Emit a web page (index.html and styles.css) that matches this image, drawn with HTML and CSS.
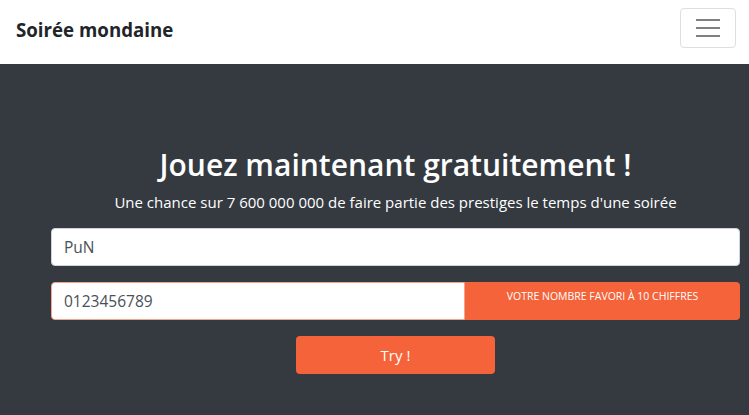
FILE: index.html
```html
<!DOCTYPE html>
<html>
	<head>
		<meta charset="UTF-8">
		<title>Soirée mondaine</title>
		<link rel="stylesheet" href="styles.css">
	</head>
	<body>
		<nav class="navbar">
			<a href="#" class="brand">Soirée mondaine</a>
			<button class="toggler" type="button">
				<span class="bar"></span>
				<span class="bar"></span>
				<span class="bar"></span>
			</button>
		</nav>
		<div class="main">
			<h1 class="title">Jouez maintenant gratuitement !</h1>
			<p class="lead">Une chance sur 7 600 000 000 de faire partie des prestiges le temps d'une soirée</p>
			<form class="form">
				<input class="field" type="text" value="PuN">
				<div class="group">
					<input class="field field-num" type="text" value="0123456789">
					<span class="addon">VOTRE NOMBRE FAVORI À 10 CHIFFRES</span>
				</div>
				<button class="btn" type="button">Try !</button>
			</form>
		</div>
	</body>
</html>
```

FILE: styles.css
```css
* {
	margin:0;
	padding:0;
	box-sizing:border-box;
}
body {
	font-family:"Open Sans", "Noto Sans", sans-serif;
	background:#343a40;
	height:415px;
	overflow:hidden;
}
.navbar {
	height:64px;
	background:#fff;
	display:flex;
	align-items:center;
	justify-content:space-between;
	padding:0 13px 0 16px;
}
	.brand {
		color:#212529;
		font-size:18.7px;
		font-weight:700;
		text-decoration:none;
		margin-top:-5px;
	}
	.toggler {
		width:56px;
		height:40px;
		margin-top:-8px;
		background:#fff;
		border:1px solid #dedede;
		border-radius:4px;
		display:flex;
		flex-direction:column;
		align-items:center;
		justify-content:center;
		gap:6px;
	}
		.toggler .bar {
			display:block;
			width:24px;
			height:2px;
			background:#808080;
		}
.main {
	padding:81px 9px 0 51px;
	text-align:center;
	color:#fff;
}
	.title {
		font-size:30px;
		font-weight:600;
		line-height:40px;
	}
	.lead {
		font-size:15px;
		line-height:22px;
		margin-top:6px;
	}
	.form {
		margin-top:15px;
		display:flex;
		flex-direction:column;
		align-items:center;
	}
		.field {
			width:100%;
			height:38px;
			border:1px solid #ced4da;
			border-radius:4px;
			padding:0 12px;
			font-family:inherit;
			font-size:15.5px;
			color:#495057;
			background:#fff;
		}
		.group {
			width:100%;
			display:flex;
			margin-top:16px;
		}
			.field-num {
				width:414px;
				flex:none;
				border-color:#f4a48b;
				border-radius:4px 0 0 4px;
			}
			.addon {
				flex:1;
				height:38px;
				background:#f4633a;
				color:#fff;
				font-size:10.5px;
				padding-top:7px;
				border-radius:0 4px 4px 0;
			}
		.btn {
			width:199px;
			height:38px;
			margin-top:16px;
			background:#f4633a;
			border:none;
			border-radius:4px;
			color:#fff;
			font-family:inherit;
			font-size:15px;
		}
```
